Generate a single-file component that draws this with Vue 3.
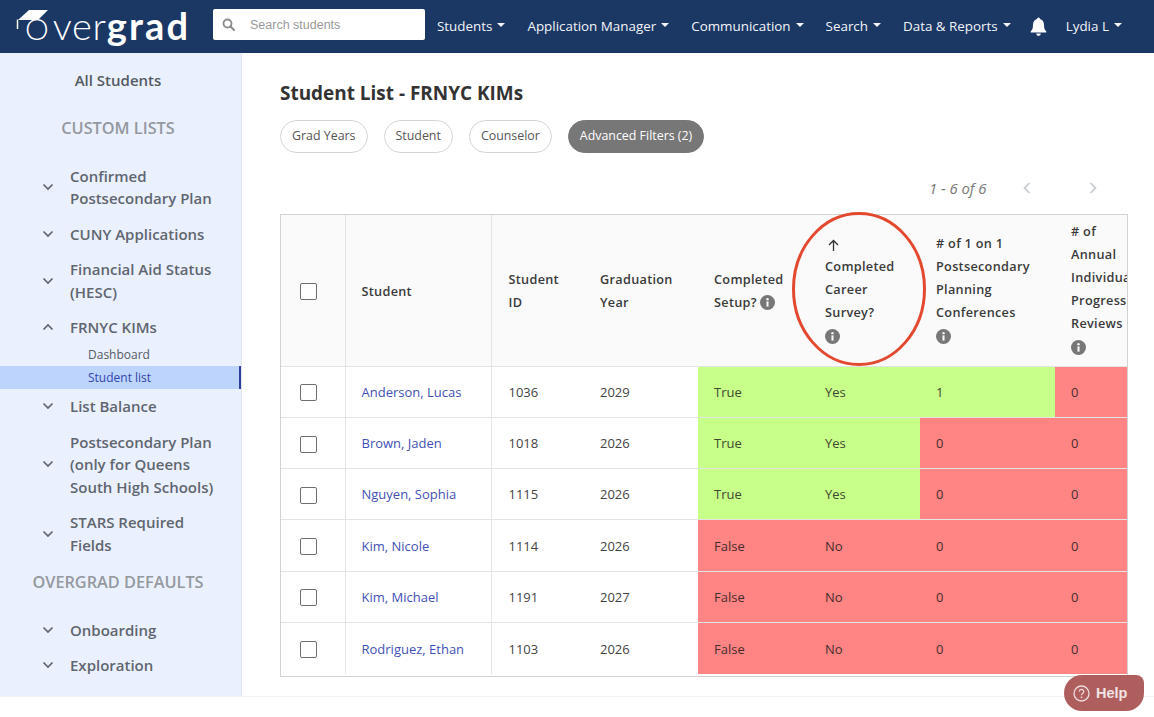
<script setup>
const navItems = ['Students', 'Application Manager', 'Communication', 'Search', 'Data & Reports']
const chips = ['Grad Years', 'Student', 'Counselor']
const customLists = [
  { lines: ['Confirmed', 'Postsecondary Plan'] },
  { lines: ['CUNY Applications'] },
  { lines: ['Financial Aid Status', '(HESC)'] },
  { lines: ['FRNYC KIMs'], open: true },
  { lines: ['List Balance'] },
  { lines: ['Postsecondary Plan', '(only for Queens', 'South High Schools)'] },
  { lines: ['STARS Required', 'Fields'] }
]
const columns = [
  { key: 'student', lines: ['Student'], cls: 'c-student' },
  { key: 'id', lines: ['Student', 'ID'], cls: 'c-id' },
  { key: 'year', lines: ['Graduation', 'Year'], cls: 'c-year' }
]
const rows = [
  { name: 'Anderson, Lucas', id: 1036, year: 2029, setup: 'True', survey: 'Yes', conf: 1, rev: 0 },
  { name: 'Brown, Jaden', id: 1018, year: 2026, setup: 'True', survey: 'Yes', conf: 0, rev: 0 },
  { name: 'Nguyen, Sophia', id: 1115, year: 2026, setup: 'True', survey: 'Yes', conf: 0, rev: 0 },
  { name: 'Kim, Nicole', id: 1114, year: 2026, setup: 'False', survey: 'No', conf: 0, rev: 0 },
  { name: 'Kim, Michael', id: 1191, year: 2027, setup: 'False', survey: 'No', conf: 0, rev: 0 },
  { name: 'Rodriguez, Ethan', id: 1103, year: 2026, setup: 'False', survey: 'No', conf: 0, rev: 0 }
]
const tone = (v) => (v === 'True' || v === 'Yes' || v === 1 ? 'good' : 'bad')
</script>

<template>
  <div class="page">
    <header class="nav">
      <div class="logo">
        <svg class="cap" width="36" height="24" viewBox="0 0 36 24">
          <path d="M13 1 H32 L22 11 H2 Z" fill="#fff" />
          <path d="M1.5 10.5 V20" stroke="#fff" stroke-width="1.5" fill="none" />
        </svg>
        <span class="l-o">O</span><span class="l-ver">ver</span><span class="l-grad">grad</span>
      </div>
      <div class="search">
        <svg width="13" height="13" viewBox="0 0 13 13">
          <circle cx="5.5" cy="5.5" r="4" fill="none" stroke="#8a8a8a" stroke-width="1.8" />
          <path d="M8.5 8.5 L12 12" stroke="#8a8a8a" stroke-width="2" stroke-linecap="round" />
        </svg>
        <span>Search students</span>
      </div>
      <nav class="menu">
        <span v-for="n in navItems" :key="n" class="menu-item">{{ n }}<i class="caret"></i></span>
      </nav>
      <svg class="bell" width="17" height="19" viewBox="0 0 17 19">
        <path d="M8.5 0.5 a1.4 1.4 0 0 1 1.4 1.6 C12.6 2.8 14 5 14 8 C14 11.5 14.8 13 16.3 14.4 V15.5 H0.7 V14.4 C2.2 13 3 11.5 3 8 C3 5 4.4 2.8 7.1 2.1 A1.4 1.4 0 0 1 8.5 0.5 Z" fill="#fff" />
        <path d="M6.2 16.6 H10.8 A2.3 2.3 0 0 1 6.2 16.6 Z" fill="#fff" />
      </svg>
      <span class="menu-item user">Lydia L<i class="caret"></i></span>
    </header>

    <div class="body">
      <aside class="side">
        <div class="all">All Students</div>
        <div class="heading custom">CUSTOM LISTS</div>
        <template v-for="item in customLists" :key="item.lines[0]">
          <div class="group">
            <svg class="chev" :class="{ up: item.open }" width="12" height="8" viewBox="0 0 12 8">
              <path d="M1.5 1.5 L6 6 L10.5 1.5" fill="none" stroke="#5f6670" stroke-width="1.7" />
            </svg>
            <div class="label"><div v-for="l in item.lines" :key="l">{{ l }}</div></div>
          </div>
          <div v-if="item.open" class="subs">
            <div class="sub">Dashboard</div>
            <div class="sub active">Student list</div>
          </div>
        </template>
        <div class="heading defaults">OVERGRAD DEFAULTS</div>
        <div class="group">
          <svg class="chev" width="12" height="8" viewBox="0 0 12 8"><path d="M1.5 1.5 L6 6 L10.5 1.5" fill="none" stroke="#5f6670" stroke-width="1.7" /></svg>
          <div class="label">Onboarding</div>
        </div>
        <div class="group">
          <svg class="chev" width="12" height="8" viewBox="0 0 12 8"><path d="M1.5 1.5 L6 6 L10.5 1.5" fill="none" stroke="#5f6670" stroke-width="1.7" /></svg>
          <div class="label">Exploration</div>
        </div>
        <div class="group">
          <div class="label clipped">Application</div>
        </div>
      </aside>

      <main class="main">
        <h1 class="title">Student List - FRNYC KIMs</h1>
        <div class="chips">
          <span v-for="c in chips" :key="c" class="chip">{{ c }}</span>
          <span class="chip on">Advanced Filters (2)</span>
        </div>
        <div class="pager">
          <span class="count">1 - 6 of 6</span>
          <svg class="pg-prev" width="8" height="12" viewBox="0 0 8 12"><path d="M6.5 1 L1.5 6 L6.5 11" fill="none" stroke="#c4c7cb" stroke-width="1.6" /></svg>
          <svg class="pg-next" width="8" height="12" viewBox="0 0 8 12"><path d="M1.5 1 L6.5 6 L1.5 11" fill="none" stroke="#c4c7cb" stroke-width="1.6" /></svg>
        </div>

        <div class="table-area">
          <div class="table-wrap">
            <table class="grid">
              <thead>
                <tr>
                  <th class="c-check ruled"><span class="box"></span></th>
                  <th v-for="c in columns" :key="c.key" :class="[c.cls, { ruled: c.key === 'student' }]">
                    <div v-for="l in c.lines" :key="l">{{ l }}</div>
                  </th>
                  <th class="c-setup">
                    <div>Completed</div>
                    <div class="inline">Setup? <svg class="info" viewBox="0 0 16 16"><use href="#info-dot" /></svg></div>
                  </th>
                  <th class="c-survey">
                    <svg class="arrow" width="13" height="13" viewBox="0 0 13 13">
                      <path d="M6.5 12 V2 M2 6 L6.5 1.5 L11 6" fill="none" stroke="#333" stroke-width="1.3" />
                    </svg>
                    <div>Completed</div>
                    <div>Career</div>
                    <div>Survey?</div>
                    <svg class="info block" viewBox="0 0 16 16"><use href="#info-dot" /></svg>
                  </th>
                  <th class="c-conf">
                    <div># of 1 on 1</div>
                    <div>Postsecondary</div>
                    <div>Planning</div>
                    <div>Conferences</div>
                    <svg class="info block" viewBox="0 0 16 16"><use href="#info-dot" /></svg>
                  </th>
                  <th class="c-rev">
                    <div># of</div>
                    <div>Annual</div>
                    <div>Individual</div>
                    <div>Progress</div>
                    <div>Reviews</div>
                    <svg class="info block" viewBox="0 0 16 16"><use href="#info-dot" /></svg>
                  </th>
                </tr>
              </thead>
              <tbody>
                <tr v-for="r in rows" :key="r.id">
                  <td class="ruled"><span class="box"></span></td>
                  <td class="ruled"><a class="link">{{ r.name }}</a></td>
                  <td>{{ r.id }}</td>
                  <td>{{ r.year }}</td>
                  <td :class="tone(r.setup)">{{ r.setup }}</td>
                  <td :class="tone(r.survey)">{{ r.survey }}</td>
                  <td :class="tone(r.conf)">{{ r.conf }}</td>
                  <td :class="tone(r.rev)">{{ r.rev }}</td>
                </tr>
              </tbody>
            </table>
          </div>
          <svg class="ring" width="140" height="160" viewBox="0 0 140 160">
            <ellipse cx="70" cy="80" rx="65.5" ry="75.5" fill="none" stroke="#e2492f" stroke-width="3" />
          </svg>
        </div>
      </main>
    </div>

    <svg width="0" height="0" class="defs">
      <symbol id="info-dot" viewBox="0 0 16 16">
        <circle cx="8" cy="8" r="8" fill="#777" />
        <rect x="6.9" y="6.8" width="2.2" height="5.6" fill="#fafafa" />
        <circle cx="8" cy="4.4" r="1.3" fill="#fafafa" />
      </symbol>
    </svg>

    <div class="help">
      <svg width="17" height="17" viewBox="0 0 17 17">
        <circle cx="8.5" cy="8.5" r="7.5" fill="none" stroke="#ecdcdc" stroke-width="1.3" />
        <path d="M6.3 6.6 A2.2 2.2 0 1 1 9.6 8.5 C8.8 9 8.5 9.4 8.5 10.3" fill="none" stroke="#ecdcdc" stroke-width="1.3" />
        <circle cx="8.5" cy="12.3" r=".9" fill="#ecdcdc" />
      </svg>
      <span>Help</span>
    </div>
  </div>
</template>

<style scoped>
.page {
  position: relative;
  width: 1154px;
  height: 717px;
  overflow: hidden;
  background: #fff;
  font-family: "Open Sans", sans-serif;
  color: #333;
}
.defs { position: absolute; }

/* nav */
.nav {
  height: 53px;
  background: #1b3764;
  display: flex;
  align-items: center;
  color: #fff;
}
.logo {
  position: relative;
  width: 213px;
  flex: none;
  padding-left: 25px;
  box-sizing: border-box;
  font-family: Lato, sans-serif;
  font-size: 38px;
  line-height: 53px;
  white-space: nowrap;
  margin-top: 1px;
}
.cap { position: absolute; left: 16px; top: 10px; }
.l-o { font-size: 30px; font-weight: 300; margin-right: 4px; }
.l-ver { font-weight: 300; letter-spacing: .7px; }
.l-grad { font-weight: 700; letter-spacing: 2.2px; }
.search {
  width: 212px;
  height: 31px;
  margin-top: -4px;
  flex: none;
  box-sizing: border-box;
  background: #fff;
  border-radius: 2px;
  display: flex;
  align-items: center;
  gap: 15px;
  padding-left: 9px;
  font-family: "Liberation Sans", sans-serif;
  font-size: 12.5px;
  color: #999;
}
.menu {
  display: flex;
  gap: 22px;
  margin-left: 12px;
  margin-top: -2px;
}
.menu-item {
  font-size: 13.4px;
  font-weight: 500;
  white-space: nowrap;
  display: inline-flex;
  align-items: center;
  color: #f3f5f8;
}
.caret {
  width: 0;
  height: 0;
  margin-left: 5px;
  margin-top: -2px;
  border-left: 4px solid transparent;
  border-right: 4px solid transparent;
  border-top: 4px solid #f3f5f8;
}
.bell { margin-left: 19px; flex: none; }
.user { margin-left: 19px; margin-top: -2px; }

/* layout */
.body { display: flex; height: 643px; border-bottom: 1px solid #f3f3f8; }

/* sidebar */
.side {
  width: 242px;
  flex: none;
  box-sizing: border-box;
  background: #ebf0fe;
  border-right: 1px solid #dfe4ee;
  overflow: hidden;
  font-size: 15px;
  font-weight: 600;
  color: #5f6670;
  line-height: 22.5px;
}
.all {
  width: 236px;
  text-align: center;
  margin-top: 16px;
  color: #555b63;
}
.heading {
  width: 236px;
  text-align: center;
  font-size: 16.3px;
  color: #94989f;
}
.custom { margin-top: 25px; margin-bottom: 19px; }
.defaults { margin-top: 8px; margin-bottom: 19px; }
.group {
  display: flex;
  align-items: center;
  padding: 6.5px 0 6.5px 42px;
}
.chev { flex: none; margin-right: 16px; }
.chev.up { transform: rotate(180deg); }
.clipped { padding-left: 28px; }
.subs { margin-top: -2.5px; }
.sub {
  height: 23px;
  line-height: 23px;
  padding-left: 88px;
  font-size: 12px;
  font-weight: 400;
  color: #555b63;
}
.sub.active {
  background: #bdd4fd;
  border-right: 2px solid #2f3f9e;
  color: #3244ad;
}

/* main */
.main { position: relative; flex: 1; padding-left: 38px; min-width: 0; }
.title {
  margin: 28px 0 0;
  font-size: 18.95px;
  line-height: 25px;
  font-weight: 700;
  color: #333;
}
.chips { display: flex; gap: 16px; margin-top: 14px; }
.chip {
  height: 33px;
  box-sizing: border-box;
  padding: 0 11px;
  border: 1.5px solid #d4d4d4;
  border-radius: 17px;
  font-size: 12.4px;
  line-height: 30px;
  color: #555;
  white-space: nowrap;
}
.chip.on { background: #777; border-color: #777; color: #fff; }
.pager {
  display: flex;
  align-items: center;
  height: 20px;
  margin: 24.5px 0 0;
  padding-left: 649px;
}
.count { font-size: 14.8px; font-style: italic; color: #777; width: 58px; white-space: nowrap; }
.pg-prev { margin-left: 36px; }
.pg-next { margin-left: 58px; }

.table-area { position: relative; margin-top: 16.5px; width: 848px; }
.table-wrap {
  width: 848px;
  height: 463px;
  box-sizing: border-box;
  border: 1.5px solid #d2d2d2;
  overflow: hidden;
}
.grid {
  table-layout: fixed;
  width: 911px;
  border-collapse: collapse;
  font-size: 13px;
}
.c-check { width: 64px; }
.c-student { width: 146px; }
.c-id { width: 93px; }
.c-year { width: 114px; }
.c-setup { width: 111px; }
.c-survey { width: 111px; }
.c-conf { width: 135px; }
.c-rev { width: 137px; }
th {
  height: 151px;
  box-sizing: border-box;
  background: #fafafa;
  font-size: 12.7px;
  font-weight: 600;
  text-align: left;
  padding: 2px 0 0 16px;
  line-height: 23px;
  color: #3a3a3a;
  letter-spacing: .3px;
  border-bottom: 1px solid #e4e4e4;
  white-space: nowrap;
}
th.c-conf { padding-top: 0; padding-bottom: 4px; }
th.c-rev { padding-top: 0; padding-bottom: 5px; }
th.c-id, td:nth-child(3) { padding-left: 17px; }
td {
  height: 51.33px;
  box-sizing: border-box;
  padding: 0 0 0 16px;
  border-bottom: 1px solid #e4e4e4;
  color: #444;
}
tbody tr:last-child td { border-bottom: none; }
.ruled { border-right: 1px solid #e4e4e4; }
th.ruled:first-child, td.ruled:first-child { text-align: center; padding: 0 8px 0 0; }
.box {
  display: inline-block;
  width: 17px;
  height: 17px;
  box-sizing: border-box;
  border: 1.5px solid #6e6e6e;
  border-radius: 2px;
  background: #fff;
  vertical-align: middle;
}
.link { color: #3f51b5; }
.good { background: #c8ff88; color: #3d4a30; }
.bad { background: #ff8585; color: #4a2c2c; }
.info { width: 15px; height: 15px; vertical-align: -3px; }
.info.block { display: block; margin-top: 5px; }
.arrow { display: block; margin-bottom: 3px; margin-left: 2px; }
.ring { position: absolute; left: 509px; top: -5.5px; pointer-events: none; }

/* help */
.help {
  position: absolute;
  left: 1064px;
  top: 675px;
  width: 80px;
  height: 36px;
  box-sizing: border-box;
  background: #af5e5e;
  border-radius: 18px 8px 18px 18px;
  display: flex;
  align-items: center;
  gap: 6px;
  padding-left: 9px;
  font-family: "Liberation Sans", sans-serif;
  font-size: 14.5px;
  font-weight: 700;
  color: #f1e4e4;
}
</style>
